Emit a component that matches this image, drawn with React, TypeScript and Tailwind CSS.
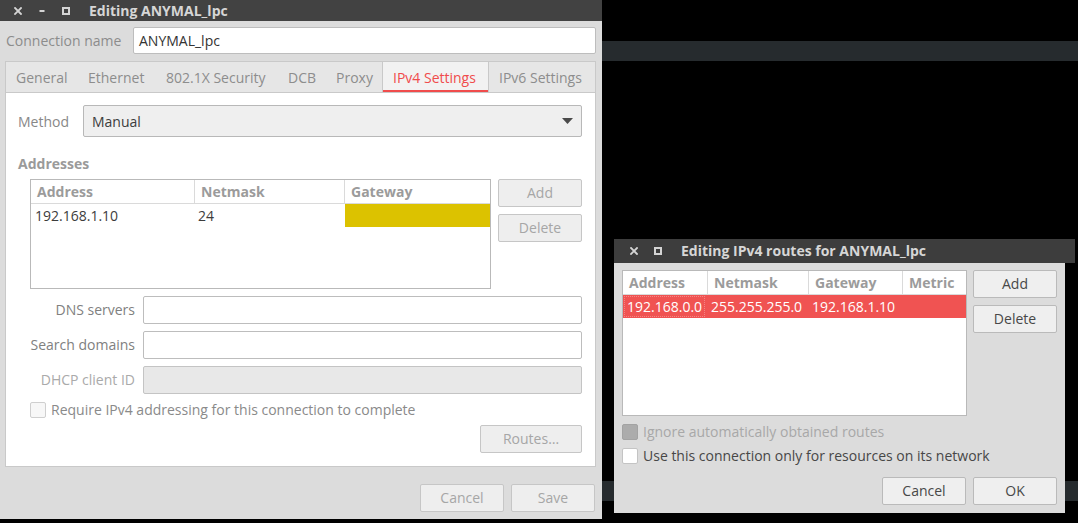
import React from "react";

function CloseIcon() {
  return (
    <svg width="8" height="8" viewBox="0 0 8 8">
      <path d="M1 1 L7 7 M7 1 L1 7" stroke="#d4d4d4" strokeWidth="1.8" strokeLinecap="square" />
    </svg>
  );
}

function MinIcon() {
  return (
    <svg width="8" height="8" viewBox="0 0 8 8">
      <path d="M1.5 4 L6.5 4" stroke="#d4d4d4" strokeWidth="2" />
    </svg>
  );
}

function MaxIcon() {
  return (
    <svg width="8" height="8" viewBox="0 0 8 8">
      <rect x="1" y="1" width="6" height="6" fill="none" stroke="#d4d4d4" strokeWidth="2" />
    </svg>
  );
}

function Btn({ label, disabled, className = "w-[84px]" }: { label: string; disabled?: boolean; className?: string }) {
  return (
    <div
      className={`h-[28px] ${className} flex items-center justify-center rounded-[2px] border shrink-0 ${
        disabled
          ? "border-[#c6c6c6] bg-[#eeeeee] text-[#a6a6a6]"
          : "border-[#bababa] bg-[#efefef] text-[#484848]"
      }`}
    >
      {label}
    </div>
  );
}

function Input({ disabled }: { disabled?: boolean }) {
  return (
    <div
      className={`h-[28px] flex-1 rounded-[2px] border ${
        disabled ? "border-[#c4c4c4] bg-[#e8e8e8]" : "border-[#bdbdbd] bg-white"
      }`}
    />
  );
}

const tabs: { label: string; w: string; active?: boolean }[] = [
  { label: "General", w: "w-[72px]" },
  { label: "Ethernet", w: "w-[78px]" },
  { label: "802.1X Security", w: "w-[122px]" },
  { label: "DCB", w: "w-[48px]" },
  { label: "Proxy", w: "w-[56px]" },
  { label: "IPv4 Settings", w: "w-[107px]", active: true },
  { label: "IPv6 Settings", w: "w-[106px]" },
];

function MainWindow() {
  return (
    <div className="absolute left-0 top-0 w-[602px] h-[519px] bg-[#dcdcdc] flex flex-col">
      {/* title bar */}
      <div className="h-[21px] bg-[#424242] flex items-center pl-[14px] shrink-0">
        <CloseIcon />
        <div className="ml-[16px]"><MinIcon /></div>
        <div className="ml-[16px]"><MaxIcon /></div>
        <div className="ml-[19px] font-bold text-[#d6d6d6] text-[14px]">Editing ANYMAL_lpc</div>
      </div>

      <div className="flex flex-col pl-[5px] pr-[6px] pt-[6px]">
        {/* connection name */}
        <div className="flex items-center h-[27px]">
          <div className="w-[128px] pl-[1px] text-[#8c8c8c]">Connection name</div>
          <div className="flex-1 h-[27px] rounded-[2px] border border-[#bdbdbd] bg-white flex items-center pl-[5px] text-[#333333]">
            ANYMAL_lpc
          </div>
        </div>

        {/* notebook */}
        <div className="mt-[7px] h-[406px] border border-[#c9c9c9] flex flex-col">
          <div className="h-[31px] bg-[#e6e6e6] border-b border-[#c9c9c9] flex shrink-0">
            {tabs.map((t) => (
              <div
                key={t.label}
                className={`${t.w} h-full relative flex items-center pl-[10px] pt-[1px] ${
                  t.active ? "bg-[#f2f2f2] border-x border-[#c9c9c9] text-[#f04c4c]" : "text-[#8d8d8d]"
                }`}
              >
                {t.label}
                {t.active && <div className="absolute left-0 right-0 bottom-0 h-[2px] bg-[#f04c4c]" />}
              </div>
            ))}
          </div>

          <div className="flex-1 bg-white pl-[12px] pr-[13px] pt-[12px] flex flex-col">
            {/* Method */}
            <div className="flex items-center h-[32px]">
              <div className="w-[65px] pt-[1px] text-[#888888]">Method</div>
              <div className="flex-1 h-[32px] bg-[#efefef] border border-[#b8b8b8] rounded-[2px] flex items-center justify-between pl-[8px] pr-[8px] text-[#3c3c3c]">
                <span className="pt-[1px]">Manual</span>
                <svg width="11" height="6" viewBox="0 0 11 6">
                  <path d="M0 0 L11 0 L5.5 6 Z" fill="#4a4a4a" />
                </svg>
              </div>
            </div>

            <div className="mt-[17px] h-[20px] flex items-center font-bold text-[#9a9a9a]">Addresses</div>

            {/* addresses table + buttons */}
            <div className="mt-[5px] flex pl-[12px]">
              <div className="w-[461px] h-[110px] border border-[#b9b9b9] bg-white flex flex-col">
                <div className="h-[24px] flex border-b border-[#dadada] font-bold text-[#9b9b9b]">
                  <div className="w-[164px] border-r border-[#dadada] pl-[6px] flex items-center">Address</div>
                  <div className="w-[150px] border-r border-[#dadada] pl-[6px] flex items-center">Netmask</div>
                  <div className="flex-1 pl-[6px] flex items-center">Gateway</div>
                </div>
                <div className="h-[23px] flex text-[#3c3c3c]">
                  <div className="w-[164px] pl-[4px] flex items-center">192.168.1.10</div>
                  <div className="w-[150px] pl-[3px] flex items-center">24</div>
                  <div className="flex-1 bg-[#dcc200]" />
                </div>
              </div>
              <div className="ml-[7px] flex flex-col gap-[7px]">
                <Btn label="Add" disabled />
                <Btn label="Delete" disabled />
              </div>
            </div>

            {/* DNS etc */}
            <div className="mt-[7px] flex flex-col gap-[7px]">
              <div className="flex items-center">
                <div className="w-[117px] text-right text-[#808080]">DNS servers</div>
                <div className="ml-[8px] flex-1 flex"><Input /></div>
              </div>
              <div className="flex items-center">
                <div className="w-[117px] text-right text-[#808080]">Search domains</div>
                <div className="ml-[8px] flex-1 flex"><Input /></div>
              </div>
              <div className="flex items-center">
                <div className="w-[117px] text-right text-[#aaaaaa]">DHCP client ID</div>
                <div className="ml-[8px] flex-1 flex"><Input disabled /></div>
              </div>
            </div>

            <div className="mt-[8px] flex items-center h-[16px] pl-[12px]">
              <div className="w-[16px] h-[16px] rounded-[2px] border border-[#cfcfcf] bg-[#f7f7f7]" />
              <div className="ml-[5px] text-[#8a8a8a]">Require IPv4 addressing for this connection to complete</div>
            </div>

            <div className="mt-[7px] flex justify-end">
              <Btn label="Routes…" disabled className="w-[102px]" />
            </div>
          </div>
        </div>

        <div className="mt-[17px] flex justify-end gap-[7px] pr-[1px]">
          <Btn label="Cancel" disabled />
          <Btn label="Save" disabled />
        </div>
      </div>
    </div>
  );
}

function RoutesDialog() {
  return (
    <div className="absolute left-[614px] top-[239px] flex flex-col">
      <div className="w-[461px] h-[24px] bg-[#3d3d3d] flex items-center pl-[16px]">
        <CloseIcon />
        <div className="ml-[16px]"><MaxIcon /></div>
        <div className="ml-[19px] font-bold text-[#d6d6d6] text-[14px]">Editing IPv4 routes for ANYMAL_lpc</div>
      </div>
      <div className="w-[451px] h-[250px] bg-[#dcdcdc] px-[8px] pt-[7px] flex flex-col">
        <div className="flex">
          <div className="w-[345px] h-[146px] border border-[#b9b9b9] bg-white flex flex-col">
            <div className="h-[24px] flex border-b border-[#dadada] font-bold text-[#9b9b9b]">
              <div className="w-[85px] border-r border-[#dadada] pl-[6px] flex items-center">Address</div>
              <div className="w-[101px] border-r border-[#dadada] pl-[6px] flex items-center">Netmask</div>
              <div className="w-[94px] border-r border-[#dadada] pl-[6px] flex items-center">Gateway</div>
              <div className="flex-1 pl-[6px] flex items-center">Metric</div>
            </div>
            <div className="h-[23px] flex bg-[#f05352] text-white">
              <div className="w-[85px] relative pl-[4px] flex items-center">
                192.168.0.0
                <div className="absolute left-[1px] right-[3px] top-[1px] bottom-[1px] border border-dotted border-[#f48584]" />
              </div>
              <div className="w-[101px] pl-[3px] flex items-center">255.255.255.0</div>
              <div className="w-[94px] pl-[3px] flex items-center">192.168.1.10</div>
              <div className="flex-1" />
            </div>
          </div>
          <div className="ml-[6px] flex flex-col gap-[7px]">
            <Btn label="Add" />
            <Btn label="Delete" />
          </div>
        </div>

        <div className="mt-[8px] flex items-center h-[16px]">
          <div className="w-[16px] h-[16px] rounded-[2px] border border-[#a3a3a3] bg-[#acacac]" />
          <div className="ml-[5px] text-[#a8a8a8]">Ignore automatically obtained routes</div>
        </div>
        <div className="mt-[8px] flex items-center h-[16px]">
          <div className="w-[16px] h-[16px] rounded-[2px] border border-[#c4c4c4] bg-white" />
          <div className="ml-[5px] text-[#474747]">Use this connection only for resources on its network</div>
        </div>

        <div className="mt-[13px] flex justify-end gap-[7px]">
          <Btn label="Cancel" />
          <Btn label="OK" />
        </div>
      </div>
    </div>
  );
}

export default function App() {
  return (
    <div className="relative w-[1078px] h-[523px] bg-black overflow-hidden font-['Open_Sans',sans-serif] text-[14px] leading-[20px]">
      <div className="absolute left-[602px] top-[41px] w-[476px] h-[20px] bg-[#262b2e]" />
      <div className="absolute left-[602px] top-[481px] w-[476px] h-[20px] bg-[#262b2e]" />
      <MainWindow />
      <RoutesDialog />
    </div>
  );
}
